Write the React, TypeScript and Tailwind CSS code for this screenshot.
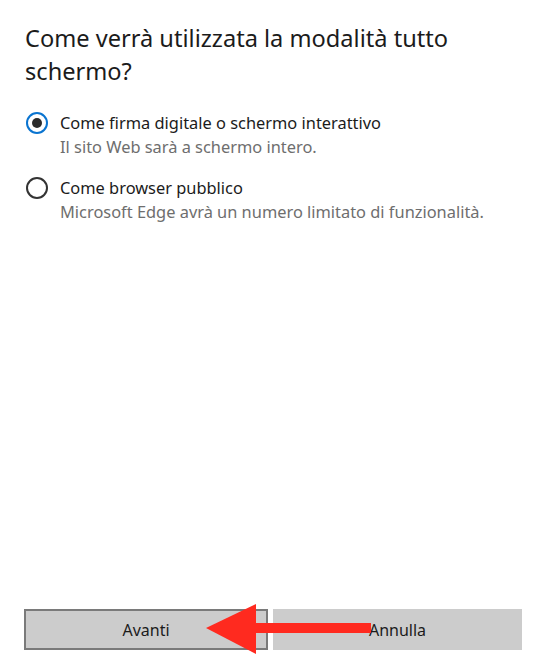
import { useState } from 'react';

const options = [
  {
    id: 'kiosk',
    label: 'Come firma digitale o schermo interattivo',
    hint: 'Il sito Web sarà a schermo intero.',
  },
  {
    id: 'public',
    label: 'Come browser pubblico',
    hint: 'Microsoft Edge avrà un numero limitato di funzionalità.',
  },
];

function Radio({ checked }: { checked: boolean }) {
  return checked ? (
    <span className="flex h-[22px] w-[22px] shrink-0 items-center justify-center rounded-full border-[2px] border-[#0a74d0]">
      <span className="block h-[10px] w-[10px] rounded-full bg-[#2b2b2b]" />
    </span>
  ) : (
    <span className="block h-[22px] w-[22px] shrink-0 rounded-full border-[2px] border-[#333333]" />
  );
}

export default function App() {
  const [mode, setMode] = useState('kiosk');

  return (
    <div
      className="flex h-[669px] w-[547px] flex-col bg-white text-[#1b1b1b]"
      style={{ fontFamily: '"Noto Sans", "Open Sans", sans-serif' }}
    >
      <h1 className="px-[25px] pt-[22px] text-[23.6px] leading-[33px] font-normal">
        Come verrà utilizzata la modalità tutto schermo?
      </h1>

      <div className="mt-[23px] flex flex-col gap-[17px] px-[26px]">
        {options.map((opt) => (
          <label
            key={opt.id}
            className="flex cursor-pointer items-start gap-[12px]"
            onClick={() => setMode(opt.id)}
          >
            <div className="pt-[1px]">
              <Radio checked={mode === opt.id} />
            </div>
            <div className="flex flex-col">
              <span className="text-[16.4px] leading-[24px]">{opt.label}</span>
              <span className="text-[16.4px] leading-[24px] text-[#6e6e6e]">{opt.hint}</span>
            </div>
          </label>
        ))}
      </div>

      <div className="mt-auto mb-[19px] flex gap-[5px] px-[24px]">
        <button className="relative h-[41px] w-[244px] border-2 border-[#7a7a7a] bg-[#cccccc] text-[16px] text-[#1b1b1b]">
          Avanti
          {/* red annotation arrow */}
          <svg
            className="pointer-events-none absolute left-[180px] top-[-7px] z-10 overflow-visible"
            width="166"
            height="51"
            viewBox="0 0 166 51"
          >
            <polygon points="0,24 50,0 50,50" fill="#ff2a1f" />
            <rect x="49" y="19" width="116" height="10" fill="#ff2a1f" />
          </svg>
        </button>
        <button className="h-[41px] w-[249px] bg-[#cccccc] text-[16px] text-[#1b1b1b]">Annulla</button>
      </div>
    </div>
  );
}
